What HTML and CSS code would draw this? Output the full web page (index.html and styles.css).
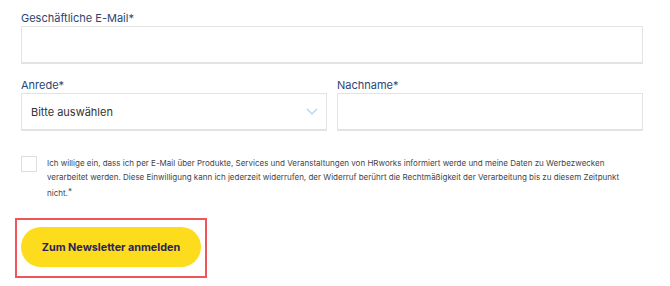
FILE: index.html
```html
<!DOCTYPE html>
<html lang="de">
<head>
    <meta charset="UTF-8">
    <meta name="viewport" content="width=device-width, initial-scale=1.0">
    <title>Newsletter</title>
    <link rel="stylesheet" href="styles.css">
</head>
<body>

    <form class="form">
        <div class="field">
            <label class="label">Geschäftliche E-Mail*</label>
            <input class="input" type="email">
        </div>

        <div class="row">
            <div class="field">
                <label class="label">Anrede*</label>
                <div class="select">
                    <span>Bitte auswählen</span>
                    <svg class="chevron" width="12" height="7" viewBox="0 0 12 7">
                        <path d="M1 1 L6 6 L11 1" fill="none" stroke="#a9d4ee" stroke-width="1.2"/>
                    </svg>
                </div>
            </div>
            <div class="field">
                <label class="label">Nachname*</label>
                <input class="input" type="text">
            </div>
        </div>

        <div class="consent">
            <span class="checkbox"></span>
            <p class="consent-text">Ich willige ein, dass ich per E-Mail über Produkte, Services und Veranstaltungen von HRworks informiert werde und meine Daten zu Werbezwecken<br>verarbeitet werden. Diese Einwilligung kann ich jederzeit widerrufen, der Widerruf berührt die Rechtmäßigkeit der Verarbeitung bis zu diesem Zeitpunkt<br>nicht.<span class="star">*</span></p>
        </div>

        <div class="highlight">
            <button class="submit" type="button">Zum Newsletter anmelden</button>
        </div>
    </form>

</body>
</html>
```

FILE: styles.css
```css
/* General */
body {
    margin: 0;
    background: #fff;
    font-family: 'Inter', 'Liberation Sans', sans-serif;
}

.form {
    width: 622px;
    padding: 11px 0 0 21px;
}

/* Fields */
.field {
    display: flex;
    flex-direction: column;
}

.label {
    font-size: 11px;
    color: #2c4670;
    line-height: 15px;
}

.input,
.select {
    box-sizing: border-box;
    height: 38px;
    border: 1px solid #e3e3e3;
    border-bottom-width: 2px;
    background: #fff;
    outline: none;
    margin: 0;
    border-radius: 0;
}

.row {
    display: grid;
    grid-template-columns: 1fr 1fr;
    gap: 10px;
    margin-top: 14px;
}

.select {
    display: flex;
    align-items: center;
    justify-content: space-between;
    padding: 0 8px 0 9px;
    font-size: 11px;
    color: #333;
}

/* Consent */
.consent {
    display: flex;
    gap: 10px;
    margin-top: 25px;
}

.checkbox {
    flex: none;
    box-sizing: border-box;
    width: 16px;
    height: 16px;
    border: 1px solid #dedede;
}

.consent-text {
    margin: 0;
    font-size: 8px;
    line-height: 14px;
    color: #444;
    white-space: nowrap;
}

.star {
    font-size: 8px;
    vertical-align: 2px;
}

/* Button */
.highlight {
    display: inline-block;
    margin: 18px 0 0 -6px;
    padding: 7px 4px 9px 4px;
    border: 2px solid #f0555a;
}

.submit {
    display: block;
    width: 180px;
    height: 40px;
    border: none;
    border-radius: 20px;
    background: #fcdc1d;
    color: #2b2458;
    font-family: 'Inter', sans-serif;
    font-weight: 700;
    font-size: 10.8px;
    cursor: pointer;
}
```
